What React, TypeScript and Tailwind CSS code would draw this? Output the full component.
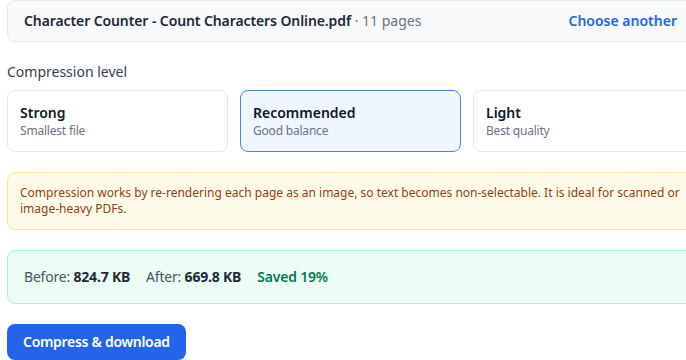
const levels = [
  { id: "strong", title: "Strong", hint: "Smallest file" },
  { id: "recommended", title: "Recommended", hint: "Good balance" },
  { id: "light", title: "Light", hint: "Best quality" },
]

export default function App() {
  const selected = "recommended"

  return (
    <div className="w-[686px] h-[360px] overflow-hidden bg-white font-['Segoe_UI','Noto_Sans',sans-serif]">
      <div className="w-[687px] ml-[7px]">
        {/* File bar */}
        <div className="h-[42px] flex items-center justify-between px-4 rounded-lg border border-[#e5e7eb] bg-[#f8fafc]">
          <div className="text-sm text-[#1f2937]">
            <span className="font-semibold tracking-[-0.1px]">Character Counter - Count Characters Online.pdf</span>
            <span className="text-[#6b7280]"> · 11 pages</span>
          </div>
          <button className="text-sm font-semibold text-[#2563eb]">Choose another</button>
        </div>

        {/* Compression level */}
        <div className="mt-5 mb-2 text-sm leading-5 text-[#374151]">Compression level</div>
        <div className="grid grid-cols-3 gap-3">
          {levels.map((level) => (
            <div
              key={level.id}
              className={`rounded-lg border px-3 py-3 ${
                level.id === selected ? "border-[#4a84dc] bg-[#eff6ff]" : "border-[#e5e7eb] bg-white"
              }`}
            >
              <div className="text-sm leading-5 font-semibold text-[#111827]">{level.title}</div>
              <div className="text-xs leading-4 tracking-[-0.2px] text-[#6b7280]">{level.hint}</div>
            </div>
          ))}
        </div>

        {/* Notice */}
        <div className="mt-5 rounded-lg border border-[#fde68a] bg-[#fffbeb] p-3 text-xs leading-4 text-[#92400e]">
          Compression works by re-rendering each page as an image, so text becomes non-selectable. It is ideal for
          scanned or image-heavy PDFs.
        </div>

        {/* Result */}
        <div className="mt-5 rounded-lg border border-[#a7f3d0] bg-[#ecfdf5] px-4 py-4 flex items-center gap-4 text-sm leading-5 tracking-[-0.2px] text-[#4b5563]">
          <span>
            Before: <span className="font-bold text-[#1f2937]">824.7 KB</span>
          </span>
          <span>
            After: <span className="font-bold text-[#1f2937]">669.8 KB</span>
          </span>
          <span className="font-semibold text-[#047857]">Saved 19%</span>
        </div>

        <button className="mt-5 h-9 px-4 rounded-lg bg-[#2563eb] text-sm font-semibold tracking-[-0.3px] text-white">
          Compress &amp; download
        </button>
      </div>
    </div>
  )
}
